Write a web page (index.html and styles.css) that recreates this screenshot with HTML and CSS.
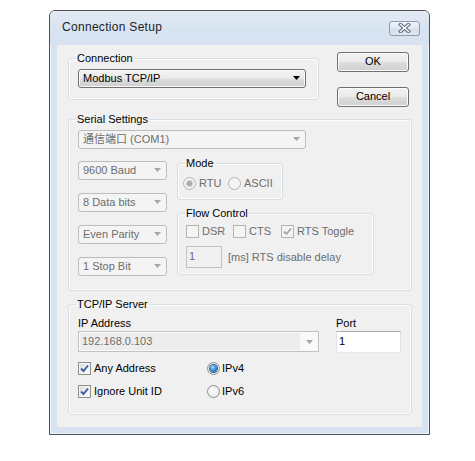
FILE: index.html
```html
<!DOCTYPE html>
<html>
<head>
<meta charset="utf-8">
<title>Connection Setup</title>
<link rel="stylesheet" href="styles.css">
</head>
<body>
<div class="window">
  <div class="titlebar">
    <span class="title">Connection Setup</span>
    <span class="close"><svg width="13" height="10" viewBox="0 0 13 10"><path d="M2.5 1.5 L10.5 8.5 M10.5 1.5 L2.5 8.5" stroke="#5b6574" stroke-width="3.4" stroke-linecap="square" fill="none"/><path d="M2.5 1.5 L10.5 8.5 M10.5 1.5 L2.5 8.5" stroke="#ffffff" stroke-width="1.5" stroke-linecap="square" fill="none"/></svg></span>
  </div>
  <div class="frame">
    <div class="client">
      <div class="toprow">
        <fieldset class="group conn">
          <legend>Connection</legend>
          <div class="gbody conn-body">
            <div class="combo active w228"><span class="ctext">Modbus TCP/IP</span><svg class="arrow" width="7" height="4" viewBox="0 0 7 4"><path d="M0 0 H7 L3.5 4 Z" fill="#000"/></svg></div>
          </div>
        </fieldset>
        <div class="buttons">
          <div class="btn">OK</div>
          <div class="btn">Cancel</div>
        </div>
      </div>

      <fieldset class="group serial">
        <legend>Serial Settings</legend>
        <div class="gbody serial-body">
          <div class="combo disabled w228"><span class="ctext">通信端口 (COM1)</span><svg class="arrow" width="7" height="4" viewBox="0 0 7 4"><path d="M0 0 H7 L3.5 4 Z" fill="#a7a7a7"/></svg></div>
          <div class="serial-main">
            <div class="serial-left">
              <div class="combo disabled w89"><span class="ctext">9600 Baud</span><svg class="arrow" width="7" height="4" viewBox="0 0 7 4"><path d="M0 0 H7 L3.5 4 Z" fill="#a7a7a7"/></svg></div>
              <div class="combo disabled w89"><span class="ctext">8 Data bits</span><svg class="arrow" width="7" height="4" viewBox="0 0 7 4"><path d="M0 0 H7 L3.5 4 Z" fill="#a7a7a7"/></svg></div>
              <div class="combo disabled w89"><span class="ctext">Even Parity</span><svg class="arrow" width="7" height="4" viewBox="0 0 7 4"><path d="M0 0 H7 L3.5 4 Z" fill="#a7a7a7"/></svg></div>
              <div class="combo disabled w89"><span class="ctext">1 Stop Bit</span><svg class="arrow" width="7" height="4" viewBox="0 0 7 4"><path d="M0 0 H7 L3.5 4 Z" fill="#a7a7a7"/></svg></div>
            </div>
            <div class="serial-right">
              <fieldset class="group mode">
                <legend>Mode</legend>
                <div class="gbody mode-body">
                  <div class="opt w45"><span class="radio disabled on"></span><span class="dim">RTU</span></div>
                  <div class="opt"><span class="radio disabled"></span><span class="dim">ASCII</span></div>
                </div>
              </fieldset>
              <fieldset class="group flow">
                <legend>Flow Control</legend>
                <div class="gbody flow-body">
                  <div class="row">
                    <div class="opt w47"><span class="cb disabled"></span><span class="dim">DSR</span></div>
                    <div class="opt w48"><span class="cb disabled"></span><span class="dim">CTS</span></div>
                    <div class="opt"><span class="cb disabled"><svg width="11" height="11" viewBox="0 0 11 11"><path d="M2 5.5 L4.5 8 L9 2.5" fill="none" stroke="#a8a8a8" stroke-width="1.8"/></svg></span><span class="dim">RTS Toggle</span></div>
                  </div>
                  <div class="row delay">
                    <div class="textbox disabled">1</div>
                    <span class="dim">[ms] RTS disable delay</span>
                  </div>
                </div>
              </fieldset>
            </div>
          </div>
        </div>
      </fieldset>

      <fieldset class="group tcp">
        <legend>TCP/IP Server</legend>
        <div class="gbody tcp-body">
          <div class="tcp-top">
            <div class="field-ip">
              <div class="flabel">IP Address</div>
              <div class="ipcombo"><span class="ipfield">192.168.0.103</span><svg class="arrow" width="7" height="4" viewBox="0 0 7 4"><path d="M0 0 H7 L3.5 4 Z" fill="#a7a7a7"/></svg></div>
            </div>
            <div class="field-port">
              <div class="flabel">Port</div>
              <div class="textbox port">1</div>
            </div>
          </div>
          <div class="tcp-opts">
            <div class="opt"><span class="cb"><svg width="11" height="11" viewBox="0 0 11 11"><path d="M2 5.5 L4.5 8 L9 2.5" fill="none" stroke="#3b5ea6" stroke-width="1.9"/></svg></span><span>Any Address</span></div>
            <div class="opt ip"><span class="radio on"></span><span>IPv4</span></div>
            <div class="opt"><span class="cb"><svg width="11" height="11" viewBox="0 0 11 11"><path d="M2 5.5 L4.5 8 L9 2.5" fill="none" stroke="#3b5ea6" stroke-width="1.9"/></svg></span><span>Ignore Unit ID</span></div>
            <div class="opt ip"><span class="radio"></span><span>IPv6</span></div>
          </div>
        </div>
      </fieldset>
    </div>
  </div>
</div>
</body>
</html>
```

FILE: styles.css
```css
* { box-sizing: border-box; }
html, body { margin: 0; padding: 0; background: #ffffff; }
body {
  font-family: "Liberation Sans", "Noto Sans CJK SC", Arial, sans-serif;
  font-size: 11px;
  color: #000;
  line-height: 13px;
}

.window {
  margin: 10px 0 0 49px;
  width: 381px;
  height: 425px;
  border: 1px solid #4c4f55;
  border-radius: 6px 6px 0 0;
  background: #d7e3f1;
  display: flex;
  flex-direction: column;
  box-shadow: inset 0 0 0 1px rgba(255,255,255,0.6);
}

.titlebar {
  height: 34px;
  display: flex;
  align-items: center;
  justify-content: space-between;
  padding: 0 9px 1px 12px;
  background: linear-gradient(#e2eaf4, #d7e3f1 60%);
  border-radius: 5px 5px 0 0;
}
.title {
  font-size: 12px;
  letter-spacing: 0.3px;
  color: #1e1e1e;
}
.close {
  width: 31px;
  height: 15px;
  border: 1px solid #8f9aa8;
  border-radius: 3px;
  background: linear-gradient(#eef3f9, #dde6f1 50%, #d2dde9 51%, #dfe7f1);
  display: flex;
  align-items: center;
  justify-content: center;
  margin-top: 1px;
}

.frame {
  flex: 1;
  padding: 0 7px 7px 7px;
  display: flex;
}
.client {
  width: 365px;
  height: 382px;
  background: #f0f0f0;
  padding: 7px 0 0 11px;
}

/* group boxes */
.group {
  margin: 0;
  padding: 0;
  border: 1px solid #d5dfe5;
  border-radius: 3px;
  min-width: 0;
  box-shadow: inset 0 0 0 1px #fbfcfc;
}
.group > legend {
  padding: 0 1px;
  margin-left: 7px;
  line-height: 13px;
  font-size: 11px;
}

.toprow { display: flex; align-items: flex-start; }
.conn { width: 251px; }
.conn-body { padding: 4px 0 11px 9px; }
.buttons {
  margin-left: 18px;
  display: flex;
  flex-direction: column;
  gap: 15px;
}
.btn {
  width: 72px;
  height: 20px;
  border: 1px solid #707070;
  border-radius: 3px;
  background: linear-gradient(#f2f2f2 0%, #ebebeb 48%, #dddddd 52%, #cfcfcf 100%);
  box-shadow: inset 0 0 0 1px #fbfbfb;
  display: flex;
  align-items: center;
  justify-content: center;
  padding-bottom: 1px;
}

/* combos */
.combo {
  height: 19px;
  border-radius: 3px;
  display: flex;
  align-items: center;
  padding: 0 5px 1px 4px;
}
.combo .arrow { margin-left: auto; }
.combo.active {
  border: 1px solid #707070;
  background: linear-gradient(#f2f2f2 0%, #ebebeb 48%, #dddddd 52%, #cfcfcf 100%);
  box-shadow: inset 0 0 0 1px #fafafa;
}
.combo.disabled {
  border: 1px solid #bdbdbd;
  background: #f4f4f4;
  color: #6d6d6d;
}
.w228 { width: 228px; }
.w89 { width: 89px; }

.serial { width: 344px; margin-top: 6px; }
.serial-body { padding: 4px 0 14px 9px; }
.serial-main { display: flex; gap: 10px; margin-top: 8px; }
.serial-left {
  padding-top: 4px;
  display: flex;
  flex-direction: column;
  gap: 13px;
}
.serial-right { display: flex; flex-direction: column; }
.mode { width: 106px; }
.mode-body { padding: 7px 0 9px 5px; display: flex; }
.flow { width: 197px; margin-top: 7px; }
.flow-body { padding: 5px 0 6px 8px; }
.row { display: flex; align-items: center; }
.delay { margin-top: 8px; gap: 6px; }

.opt { display: flex; align-items: center; gap: 3px; height: 13px; white-space: nowrap; }
.w45 { width: 45px; }
.w47 { width: 47px; }
.w48 { width: 48px; }
.dim { color: #6d6d6d; }

/* checkbox */
.cb {
  width: 13px;
  height: 13px;
  flex: none;
  border: 1px solid #8e8f8f;
  background: linear-gradient(135deg, #dcdcdc, #ffffff);
  box-shadow: inset 0 0 0 1px #f4f4f4;
  display: flex;
  align-items: center;
  justify-content: center;
}
.cb.disabled {
  border-color: #b4b4b4;
  background: #f4f4f4;
  box-shadow: none;
}

/* radio */
.radio {
  width: 13px;
  height: 13px;
  flex: none;
  border-radius: 50%;
  border: 1px solid #8e8f8f;
  background: radial-gradient(circle at 40% 40%, #ffffff, #e2e2e2);
  display: flex;
  align-items: center;
  justify-content: center;
}
.radio.on::after {
  content: "";
  width: 7px;
  height: 7px;
  border-radius: 50%;
  background: radial-gradient(circle at 40% 35%, #b6e6ff 0%, #3c9ad8 40%, #0d4a93 100%);
  box-shadow: 0 0 0 1px #2b5c95;
}
.radio.disabled {
  border-color: #b4b4b4;
  background: #f4f4f4;
}
.radio.disabled.on::after {
  width: 5px;
  height: 5px;
  background: #a9a9a9;
  box-shadow: 0 0 0 1px #cfcfcf;
}

/* textboxes */
.textbox {
  height: 22px;
  display: flex;
  align-items: center;
  padding: 0 0 1px 2px;
}
.textbox.disabled {
  width: 36px;
  border: 1px solid #c2c2c2;
  background: #f0f0f0;
  color: #6d6d6d;
}
.textbox.port {
  width: 65px;
  border: 1px solid;
  border-color: #abadb3 #dbdfe6 #e3e9ef #e2e3ea;
  background: #ffffff;
}

.tcp { width: 344px; margin-top: 7px; }
.tcp-body { padding: 6px 0 16px 9px; }
.tcp-top { display: flex; gap: 17px; }
.flabel { height: 13px; margin-bottom: 1px; }
.ipcombo {
  width: 241px;
  height: 21px;
  border: 1px solid #c2c2c2;
  background: #f9f9f9;
  display: flex;
  align-items: center;
  padding: 1px 5px 1px 1px;
}
.ipfield {
  width: 220px;
  height: 17px;
  background: #ededed;
  color: #6d6d6d;
  padding: 2px 0 0 2px;
}
.ipcombo .arrow { margin-left: auto; }
.tcp-opts {
  margin-top: 9px;
  display: grid;
  grid-template-columns: 129px auto;
  row-gap: 10px;
}
.tcp-opts .ip { gap: 2px; }
```
